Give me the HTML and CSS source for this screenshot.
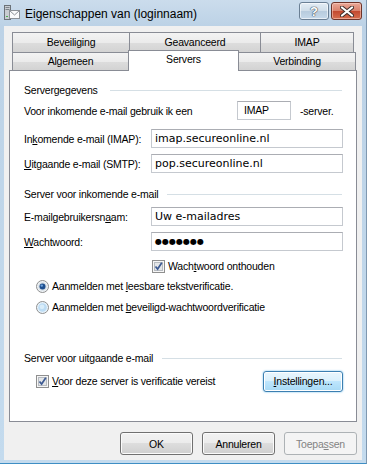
FILE: index.html
```html
<!DOCTYPE html>
<html lang="nl">
<head>
  <meta charset="UTF-8">
  <meta name="viewport" content="width=device-width, initial-scale=1.0">
  <title>Eigenschappen van (loginnaam)</title>
  <link rel="stylesheet" href="styles.css">
</head>
<body>
  <div class="window">
    <div class="titlebar">
      <svg class="app-icon" viewBox="0 0 17 16" width="17" height="16">
        <rect x="1.5" y="0.5" width="6" height="14" fill="#c9cdd2" stroke="#6b7177"/>
        <rect x="2.5" y="2" width="4" height="1" fill="#7d848b"/>
        <rect x="2.5" y="4" width="4" height="1" fill="#7d848b"/>
        <rect x="3" y="11" width="2" height="1" fill="#4caf50"/>
        <rect x="6.5" y="5.5" width="10" height="8" fill="#fbfbfb" stroke="#8c9196"/>
        <path d="M6.5 5.5 L11.5 10 L16.5 5.5" fill="none" stroke="#8c9196"/>
      </svg>
      <span class="title">Eigenschappen van (loginnaam)</span>
      <div class="caption-btns">
        <span class="cap help">?</span>
        <span class="cap close">
          <svg viewBox="0 0 14 11" width="14" height="11">
            <path d="M2 1.5 L12 9.5 M12 1.5 L2 9.5" stroke="#3b2d2a" stroke-width="4" stroke-linecap="round"/>
            <path d="M2 1.5 L12 9.5 M12 1.5 L2 9.5" stroke="#fff" stroke-width="2.2" stroke-linecap="round"/>
          </svg>
        </span>
      </div>
    </div>

    <div class="client">
      <div class="tabs">
        <div class="tab-row back">
          <span class="tab w117">Beveiliging</span>
          <span class="tab w131">Geavanceerd</span>
          <span class="tab w94">IMAP</span>
        </div>
        <div class="tab-row front">
          <span class="tab w116">Algemeen</span>
          <span class="tab active">Servers</span>
          <span class="tab w117">Verbinding</span>
        </div>
      </div>

      <div class="panel">
        <div class="group-head">
          <span>Servergegevens</span><i class="rule wide"></i>
        </div>
        <div class="row type-row">
          <span class="type-label">Voor inkomende e-mail <u>g</u>ebruik ik een</span>
          <span class="box small">IMAP</span>
          <span class="suffix">-server.</span>
        </div>
        <div class="row field gap9">
          <span class="label">In<u>k</u>omende e-mail (IMAP):</span>
          <span class="box text">imap.secureonline.nl</span>
        </div>
        <div class="row field gap6">
          <span class="label"><u>U</u>itgaande e-mail (SMTP):</span>
          <span class="box text">pop.secureonline.nl</span>
        </div>

        <div class="group-head gap12">
          <span>Server voor inkomende e-mail</span><i class="rule"></i>
        </div>
        <div class="row field gap5">
          <span class="label">E-mailgebruikersn<u>a</u>am:</span>
          <span class="box text">Uw e-mailadres</span>
        </div>
        <div class="row field gap6">
          <span class="label"><u>W</u>achtwoord:</span>
          <span class="box text dots">●●●●●●●</span>
        </div>
        <div class="row option remember">
          <svg class="check" viewBox="0 0 13 13" width="13" height="13">
            <rect x="0.5" y="0.5" width="12" height="12" fill="#f6f6f6" stroke="#8f8f8f"/>
            <rect x="2.5" y="2.5" width="8" height="8" fill="#e4e6e8" stroke="#b7bbc0"/>
            <path d="M3.5 6.5 L5.6 9 L9.8 2.8" fill="none" stroke="#3d5a92" stroke-width="1.7"/>
          </svg>
          <span>Wach<u>t</u>woord onthouden</span>
        </div>
        <div class="row option radio-first">
          <svg class="radio" viewBox="0 0 13 13" width="13" height="13">
            <circle cx="6.5" cy="6.5" r="6" fill="#eef3f7" stroke="#8f8f8f"/>
            <circle cx="6.5" cy="6.5" r="4.3" fill="#d6dde3"/>
            <circle cx="6.5" cy="6.5" r="3" fill="#1d4f8f"/>
            <circle cx="5.8" cy="5.6" r="1.2" fill="#6fa3dc"/>
          </svg>
          <span>Aanmelden met <u>l</u>eesbare tekstverificatie.</span>
        </div>
        <div class="row option radio-second">
          <svg class="radio" viewBox="0 0 13 13" width="13" height="13">
            <circle cx="6.5" cy="6.5" r="6" fill="#e8f3fb" stroke="#8f8f8f"/>
            <circle cx="6.5" cy="6.5" r="4.3" fill="#bcdcf4"/>
            <circle cx="6" cy="5.8" r="2.4" fill="#d9edfa"/>
          </svg>
          <span>Aanmelden met <u>b</u>eveiligd-wachtwoordverificatie</span>
        </div>

        <div class="group-head gap34">
          <span>Server voor uitgaande e-mail</span><i class="rule"></i>
        </div>
        <div class="row option outgoing">
          <svg class="check" viewBox="0 0 13 13" width="13" height="13">
            <rect x="0.5" y="0.5" width="12" height="12" fill="#f6f6f6" stroke="#8f8f8f"/>
            <rect x="2.5" y="2.5" width="8" height="8" fill="#e4e6e8" stroke="#b7bbc0"/>
            <path d="M3.5 6.5 L5.6 9 L9.8 2.8" fill="none" stroke="#3d5a92" stroke-width="1.7"/>
          </svg>
          <span><u>V</u>oor deze server is verificatie vereist</span>
          <span class="btn focused settings"><u>I</u>nstellingen...</span>
        </div>
      </div>

      <div class="dialog-buttons">
        <span class="btn">OK</span>
        <span class="btn">Annuleren</span>
        <span class="btn disabled">Toepa<u>s</u>sen</span>
      </div>
    </div>
  </div>
</body>
</html>
```

FILE: styles.css
```css
body {
  margin: 0;
  font-family: "Liberation Sans", Arial, sans-serif;
  font-size: 10.5px;
  letter-spacing: -0.2px;
  color: #000;
  background: #fff;
}
.window {
  width: 367px;
  height: 464px;
  box-sizing: border-box;
  display: flex;
  flex-direction: column;
  background: linear-gradient(#cbdcec, #bcd2e6 26px, #c4dbee);
  border-bottom: 1px solid #3e8ec4;
  border-right: 1px solid #7f98b0;
}
.titlebar {
  height: 26px;
  display: flex;
  align-items: flex-start;
  padding: 0 4px 0 3px;
  letter-spacing: 0;
}
.app-icon {
  margin-top: 5px;
}
.title {
  flex: 1;
  margin: 6px 0 0 5px;
  font-size: 12px;
  line-height: 16px;
}
.caption-btns {
  display: flex;
  gap: 2px;
  margin-top: 2px;
}
.cap {
  height: 18px;
  box-sizing: border-box;
  border: 1px solid #6a7f94;
  border-radius: 3px;
  display: flex;
  align-items: center;
  justify-content: center;
}
.help {
  width: 30px;
  background: linear-gradient(#e4edf5, #cfdde9 50%, #b7cbdd 50%, #c6d9ea);
  box-shadow: inset 0 0 0 1px rgba(255,255,255,0.6);
  color: #fff;
  font-weight: bold;
  font-size: 13px;
  text-shadow: 0 0 1px #3c4b5b, 0 0 1px #3c4b5b, 0 0 1px #3c4b5b;
}
.close {
  width: 31px;
  border-color: #6d3329;
  background: linear-gradient(#e9a898, #d9806b 50%, #c2482f 50%, #d66e4f);
  box-shadow: inset 0 0 0 1px rgba(255,220,210,0.5);
}
.client {
  flex: 1;
  margin: 0 4px 3px;
  background: #f0f0f0;
  display: flex;
  flex-direction: column;
}
.tabs {
  padding: 6px 0 0 8px;
}
.tab-row {
  display: flex;
  align-items: flex-start;
}
.tab {
  box-sizing: border-box;
  height: 20px;
  border: 1px solid #898c95;
  border-bottom: none;
  margin-right: -1px;
  background: linear-gradient(#f3f3f3, #ebebeb 50%, #dddddd 50%, #d3d3d3);
  text-align: center;
  line-height: 18px;
}
.front .tab {
  height: 18px;
  line-height: 17px;
}
.w117 { width: 118px; }
.w131 { width: 132px; }
.w94 { width: 94px; }
.w116 { width: 117px; }
.front .tab.active {
  position: relative;
  z-index: 1;
  width: 111px;
  height: 21px;
  margin-top: -2px;
  margin-bottom: -1px;
  background: #fff;
  line-height: 17px;
}
.panel {
  box-sizing: border-box;
  width: 348px;
  height: 352px;
  margin-left: 5px;
  border: 1px solid #898c95;
  background: #fff;
  padding: 10px 12px 0 14px;
}
.group-head {
  height: 17px;
  display: flex;
  align-items: center;
}
.rule {
  flex: 1;
  height: 1px;
  margin: 1px 2px 0 9px;
  background: #d5dfe5;
}
.rule.wide {
  margin-left: 12px;
}
.gap12 { margin-top: 12px; }
.gap34 { margin-top: 34px; }
.row {
  display: flex;
  align-items: center;
  white-space: nowrap;
}
.type-row {
  height: 19px;
  margin-top: 3px;
}
.type-label {
  width: 213px;
  flex: none;
}
.suffix {
  margin-left: 9px;
}
.field {
  height: 19px;
}
.gap9 { margin-top: 9px; }
.gap6 { margin-top: 6px; }
.gap5 { margin-top: 5px; }
.label {
  width: 127px;
  flex: none;
}
.box {
  box-sizing: border-box;
  height: 19px;
  border: 1px solid #c5c9cf;
  border-top-color: #abadb3;
  background: #fff;
  line-height: 17px;
  padding-left: 3px;
}
.box.small {
  width: 54px;
  padding-left: 6px;
}
.box.text {
  width: 192px;
  font-family: "DejaVu Sans", Verdana, sans-serif;
  font-size: 11px;
  letter-spacing: 0;
}
.box.dots {
  font-size: 8px;
}
.option {
  height: 16px;
}
.option svg {
  margin-right: 3px;
  flex: none;
}
.remember {
  margin-top: 7px;
  padding-left: 128px;
}
.radio-first {
  margin-top: 4px;
  padding-left: 12px;
}
.radio-second {
  margin-top: 5px;
  padding-left: 12px;
}
.outgoing {
  height: 20px;
  margin-top: 5px;
  padding-left: 12px;
}
.btn {
  box-sizing: border-box;
  display: flex;
  align-items: center;
  justify-content: center;
  width: 73px;
  height: 23px;
  border: 1px solid #707070;
  border-radius: 3px;
  background: linear-gradient(#f2f2f2, #ebebeb 50%, #dddddd 50%, #cfcfcf);
  box-shadow: inset 0 0 0 1px #fbfbfb;
}
.btn.focused {
  border-color: #3c7fb1;
  background: linear-gradient(#eaf6fd, #d9f0fc 50%, #bee6fd 50%, #a7d9f5);
  box-shadow: inset 0 0 0 1px #fff, 0 0 2px #5fb6e8;
}
.settings {
  width: 80px;
  height: 21px;
  margin-left: auto;
  margin-right: 1px;
}
.btn.disabled {
  border-color: #adb2b5;
  background: #f4f4f4;
  box-shadow: none;
  color: #838383;
}
.dialog-buttons {
  display: flex;
  justify-content: flex-end;
  gap: 9px;
  margin-top: 10px;
  padding-right: 5px;
}
```
